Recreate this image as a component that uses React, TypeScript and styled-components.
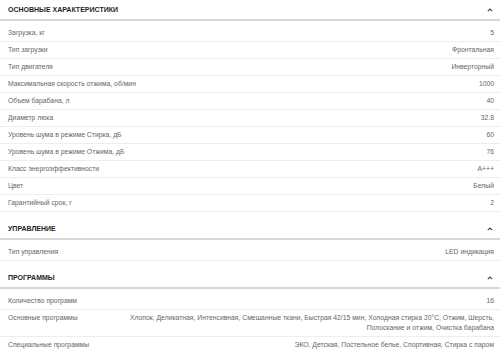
import React from "react";
import styled, { createGlobalStyle } from "styled-components";

type Spec = { label: string; value: React.ReactNode };
type Section = { title: string; rows: Spec[] };

const sections: Section[] = [
  {
    title: "ОСНОВНЫЕ ХАРАКТЕРИСТИКИ",
    rows: [
      { label: "Загрузка, кг", value: "5" },
      { label: "Тип загрузки", value: "Фронтальная" },
      { label: "Тип двигателя", value: "Инверторный" },
      { label: "Максимальная скорость отжима, об/мин", value: "1000" },
      { label: "Объем барабана, л", value: "40" },
      { label: "Диаметр люка", value: "32.8" },
      { label: "Уровень шума в режиме Стирка, дБ", value: "60" },
      { label: "Уровень шума в режиме Отжима, дБ", value: "76" },
      { label: "Класс энергоэффективности", value: "A+++" },
      { label: "Цвет", value: "Белый" },
      { label: "Гарантийный срок, г", value: "2" },
    ],
  },
  {
    title: "УПРАВЛЕНИЕ",
    rows: [{ label: "Тип управления", value: "LED индикация" }],
  },
  {
    title: "ПРОГРАММЫ",
    rows: [
      { label: "Количество программ", value: "16" },
      {
        label: "Основные программы",
        value:
          "Хлопок, Деликатная, Интенсивная, Смешанные ткани, Быстрая 42/15 мин, Холодная стирка 20°C, Отжим, Шерсть, Полоскание и отжим, Очистка барабана",
      },
      {
        label: "Специальные программы",
        value: "ЭКО, Детская, Постельное белье, Спортивная, Стирка с паром",
      },
    ],
  },
];

export default function App() {
  return (
    <>
      <GlobalStyle />
      <Page>
        {sections.map((section) => (
          <Block key={section.title}>
            <Header>
              <Title>{section.title}</Title>
              <Chevron viewBox="0 0 6 4">
                <path d="M0.8 3.2 L3 1 L5.2 3.2" />
              </Chevron>
            </Header>
            <List>
              {section.rows.map((row) => (
                <Row key={row.label}>
                  <Label>{row.label}</Label>
                  <Value>{row.value}</Value>
                </Row>
              ))}
            </List>
          </Block>
        ))}
      </Page>
    </>
  );
}

const GlobalStyle = createGlobalStyle`
  html, body {
    margin: 0;
    padding: 0;
    background: #ffffff;
  }
  body {
    font-family: "Liberation Sans", Arial, sans-serif;
  }
`;

const Page = styled.div`
  width: 500px;
  display: flex;
  flex-direction: column;
  gap: 7px;
`;

const Block = styled.section`
  display: flex;
  flex-direction: column;
`;

const Header = styled.div`
  height: 19px;
  display: flex;
  align-items: center;
  justify-content: space-between;
  padding: 0 7px 0 8px;
  border-bottom: 2px solid #d8d8d8;
`;

const Title = styled.h2`
  margin: 0;
  font-size: 7px;
  font-weight: 700;
  color: #1f1f1f;
`;

const Chevron = styled.svg`
  width: 6px;
  height: 4px;
  fill: none;
  stroke: #444;
  stroke-width: 1.1;
`;

const List = styled.div`
  display: flex;
  flex-direction: column;
  padding-top: 4px;
`;

const Row = styled.div`
  display: grid;
  grid-template-columns: 121px 1fr;
  padding: 3px 6px 3px 8px;
  border-bottom: 1px solid #eeeeee;
  font-size: 6.8px;
  line-height: 10px;
  color: #666666;
`;

const Label = styled.div`
  white-space: nowrap;
`;

const Value = styled.div`
  text-align: right;
`;
